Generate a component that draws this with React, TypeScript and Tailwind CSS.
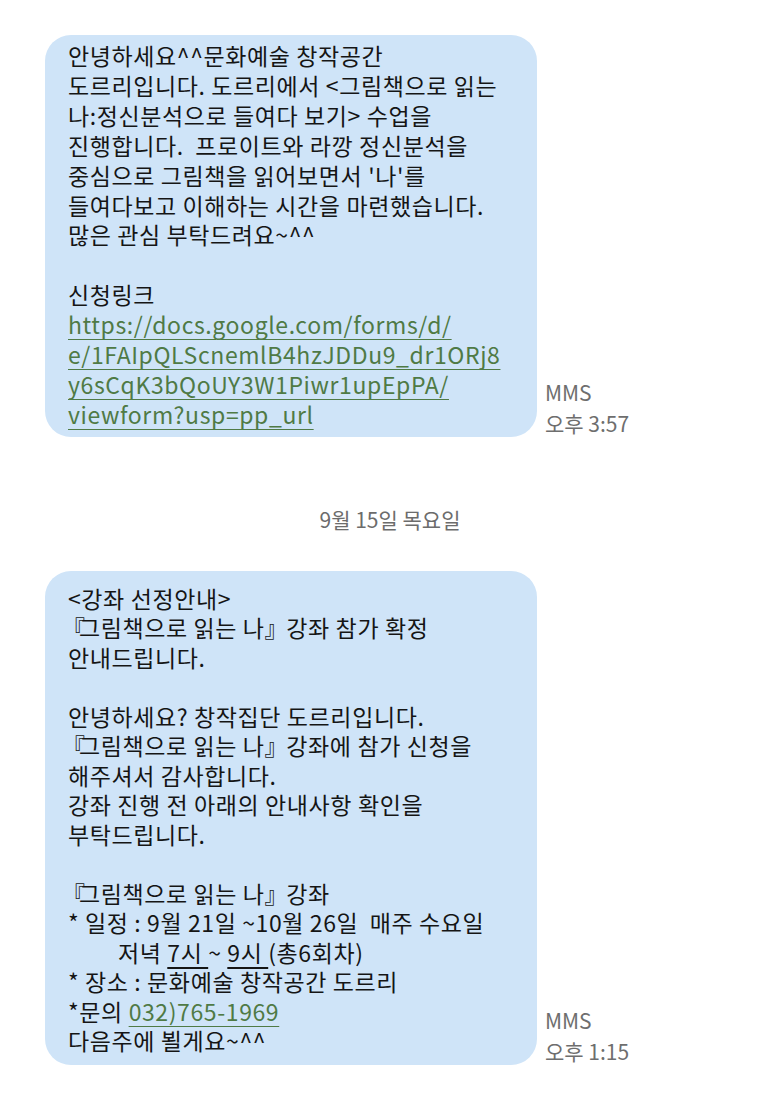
import type { ReactNode } from "react";

const link = "text-[#4f7a45] underline decoration-1 underline-offset-[5px]";

function Bubble({
  lines,
  time,
  pad,
  leading,
}: {
  lines: ReactNode[];
  time: string;
  pad: string;
  leading: string;
}) {
  return (
    <div className="flex items-end gap-[8px]">
      <div
        className={`w-[492px] rounded-[26px] bg-[#cfe4f8] px-[23px] text-[23px] tracking-[0.6px] text-[#151515] ${pad} ${leading}`}
      >
        {lines.map((l, i) => (
          <div key={i} className="whitespace-pre">
            {l === "" ? "\u00a0" : l}
          </div>
        ))}
      </div>
      <div className="mb-[-2px] text-[21px] leading-[31px] text-[#6e6e6e]">
        <div>MMS</div>
        <div>{time}</div>
      </div>
    </div>
  );
}

// narrower corner brackets, closer to the phone font
function Open() {
  return <span className="ml-[-6px] tracking-[-6px]">『</span>;
}
function Close() {
  return <span className="tracking-[-7px]">』</span>;
}

export default function App() {
  const first: ReactNode[] = [
    "안녕하세요^^문화예술 창작공간",
    "도르리입니다. 도르리에서 <그림책으로 읽는",
    "나:정신분석으로 들여다 보기> 수업을",
    "진행합니다.  프로이트와 라깡 정신분석을",
    "중심으로 그림책을 읽어보면서 '나'를",
    "들여다보고 이해하는 시간을 마련했습니다.",
    "많은 관심 부탁드려요~^^",
    "",
    "신청링크",
    <span className={link}>https://docs.google.com/forms/d/</span>,
    <span className={link}>e/1FAIpQLScnemlB4hzJDDu9_dr1ORj8</span>,
    <span className={link}>y6sCqK3bQoUY3W1Piwr1upEpPA/</span>,
    <span className={link}>viewform?usp=pp_url</span>,
  ];

  const second: ReactNode[] = [
    "<강좌 선정안내>",
    <span>
      <Open />그림책으로 읽는 나<Close /> 강좌 참가 확정
    </span>,
    "안내드립니다.",
    "",
    "안녕하세요? 창작집단 도르리입니다.",
    <span>
      <Open />그림책으로 읽는 나<Close /> 강좌에 참가 신청을
    </span>,
    "해주셔서 감사합니다.",
    "강좌 진행 전 아래의 안내사항 확인을",
    "부탁드립니다.",
    "",
    <span>
      <Open />그림책으로 읽는 나<Close /> 강좌
    </span>,
    "* 일정 : 9월 21일 ~10월 26일  매주 수요일",
    <span className="pl-[50px]">
      저녁 <span className="underline underline-offset-[5px]">7시 </span>~{" "}
      <span className="underline underline-offset-[5px]">9시 </span>(총6회차)
    </span>,
    "* 장소 : 문화예술 창작공간 도르리",
    <span>
      *문의 <span className={link}>032)765-1969</span>
    </span>,
    "다음주에 뵐게요~^^",
  ];

  return (
    <div className="min-h-screen bg-white pt-[35px] font-['Noto_Sans_CJK_KR','Noto_Sans',sans-serif]">
      <div className="pl-[45px]">
        <Bubble
          lines={first}
          time="오후 3:57"
          pad="pt-[6px] pb-[7px]"
          leading="leading-[29.9px]"
        />
      </div>
      <div className="mt-[68px] mb-[38px] pl-[7px] text-center text-[21px] leading-[28px] text-[#6c6c6c]">
        9월 15일 목요일
      </div>
      <div className="pl-[45px]">
        <Bubble
          lines={second}
          time="오후 1:15"
          pad="pt-[13px] pb-[9px]"
          leading="leading-[29.5px]"
        />
      </div>
    </div>
  );
}
